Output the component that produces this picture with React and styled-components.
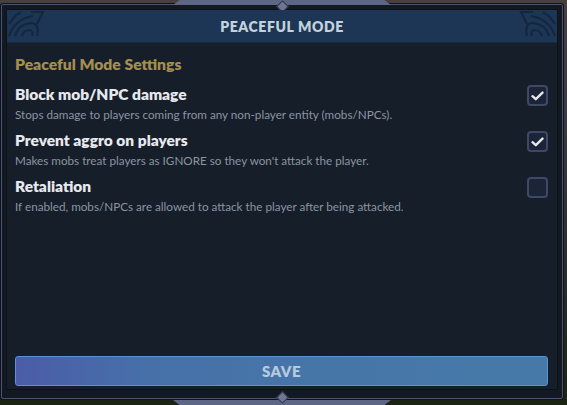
import React, { useState } from 'react'
import styled, { createGlobalStyle } from 'styled-components'

const GlobalStyle = createGlobalStyle`
  html, body {
    margin: 0;
    padding: 0;
  }
  body {
    font-family: Lato, "Noto Sans", sans-serif;
    background: #22241f;
  }
`

const Page = styled.div`
  width: 567px;
  height: 405px;
  box-sizing: border-box;
  padding: 4px 4px 6px 1px;
  background: linear-gradient(180deg, #47403f 0%, #3a3a40 30%, #262c26 70%, #1b2413 100%);
  overflow: hidden;
  display: flex;
`

const Frame = styled.div`
  position: relative;
  flex: 1;
  display: flex;
  box-sizing: border-box;
  background: #131922;
  border: 1px solid #4a5371;
  box-shadow: 0 0 0 1px #0f131b;
  border-radius: 2px;
  padding: 4px 4px 8px 4px;
`

const Tab = styled.div`
  position: absolute;
  left: 171px;
  width: 218px;
  height: 5px;
  ${p => p.bottom ? 'bottom: -7px;' : 'top: -5px;'}
  background: #5d6685;
  clip-path: ${p => p.bottom
    ? 'polygon(0 0, 100% 0, 97% 100%, 3% 100%)'
    : 'polygon(3% 0, 97% 0, 100% 100%, 0 100%)'};
`

const Diamond = styled.div`
  position: absolute;
  left: 276px;
  ${p => p.bottom ? 'bottom: -4px;' : 'top: -3px;'}
  width: 7px;
  height: 7px;
  background: #6d7795;
  border: 1px solid #2a3146;
  transform: rotate(45deg);
`

const Window = styled.div`
  flex: 1;
  display: flex;
  flex-direction: column;
  background: #161e2a;
  border: 1px solid #0d1118;
`

const Header = styled.div`
  position: relative;
  height: 32px;
  flex: none;
  display: flex;
  align-items: center;
  justify-content: center;
  background: #1d3655;
  border-bottom: 1px solid #17283f;
`

const Title = styled.h1`
  margin: 0;
  font-size: 14px;
  font-weight: 800;
  letter-spacing: 0.6px;
  color: #c3d2dc;
`

const Knot = styled.svg`
  position: absolute;
  top: 0;
  ${p => p.right ? 'right: 0; transform: scaleX(-1);' : 'left: 0;'}
  width: 40px;
  height: 28px;
`

const Body = styled.div`
  flex: 1;
  display: flex;
  flex-direction: column;
  padding: 11px 9px 3px 8px;
`

const Section = styled.h2`
  margin: 0 0 10px;
  font-size: 15.7px;
  line-height: 20px;
  font-weight: 800;
  color: #a48e50;
`

const Row = styled.div`
  display: grid;
  grid-template-columns: 1fr auto;
  column-gap: 12px;
  margin-bottom: 8px;
`

const Label = styled.div`
  font-size: 15.5px;
  line-height: 20px;
  font-weight: 800;
  color: #e7e9ee;
`

const Desc = styled.div`
  grid-column: 1;
  margin-top: 1px;
  font-size: 11.7px;
  line-height: 15px;
  color: #8b95a2;
`

const Box = styled.button`
  grid-column: 2;
  grid-row: 1;
  width: 21px;
  height: 21px;
  margin-top: 1px;
  padding: 0;
  display: flex;
  align-items: center;
  justify-content: center;
  box-sizing: border-box;
  background: #1c2437;
  border: 2px solid #3e4968;
  border-radius: 4px;
  cursor: pointer;
`

const SaveButton = styled.button`
  margin-top: auto;
  height: 30px;
  width: 100%;
  box-sizing: border-box;
  border: 1px solid #5b92d2;
  border-radius: 3px;
  background: linear-gradient(90deg, #4b5ca8 0%, #4770a9 25%, #4676a8 60%, #4679a8 100%);
  color: #b7cadc;
  font-family: Lato, "Noto Sans", sans-serif;
  font-size: 15px;
  font-weight: 800;
  letter-spacing: 0.5px;
  cursor: pointer;
`

const Check = () => (
  <svg width="13" height="10" viewBox="0 0 13 10">
    <path d="M1.5 5.2 L4.8 8.2 L11.5 1.6" fill="none" stroke="#e4e7ec" strokeWidth="2.4" strokeLinecap="round" strokeLinejoin="round" />
  </svg>
)

const CornerKnot = ({ right }) => (
  <Knot right={right} viewBox="0 0 40 28">
    <g fill="none" stroke="#142740" strokeWidth="2.2">
      <path d="M2 26 C6 14 14 8 26 6" />
      <path d="M8 26 C10 18 16 14 24 13 C30 13 32 18 30 26" />
      <path d="M15 26 C16 22 19 20 23 20 C26 21 26 24 25 26" />
      <path d="M24 2 L36 2 L30 14" />
      <path d="M2 14 L8 6 L14 2" />
    </g>
  </Knot>
)

const settings = [
  {
    label: 'Block mob/NPC damage',
    desc: 'Stops damage to players coming from any non-player entity (mobs/NPCs).',
    on: true,
  },
  {
    label: 'Prevent aggro on players',
    desc: "Makes mobs treat players as IGNORE so they won't attack the player.",
    on: true,
  },
  {
    label: 'Retaliation',
    desc: 'If enabled, mobs/NPCs are allowed to attack the player after being attacked.',
    on: false,
  },
]

const App = () => {
  const [values, setValues] = useState(settings.map(s => s.on))

  const toggle = i => setValues(values.map((v, j) => (j === i ? !v : v)))

  return (
    <Page>
      <GlobalStyle />
      <Frame>
        <Tab />
        <Diamond />
        <Window>
          <Header>
            <CornerKnot />
            <CornerKnot right />
            <Title>PEACEFUL MODE</Title>
          </Header>
          <Body>
            <Section>Peaceful Mode Settings</Section>
            {settings.map((s, i) => (
              <Row key={s.label}>
                <Label>{s.label}</Label>
                <Box onClick={() => toggle(i)} aria-pressed={values[i]}>
                  {values[i] && <Check />}
                </Box>
                <Desc>{s.desc}</Desc>
              </Row>
            ))}
            <SaveButton>SAVE</SaveButton>
          </Body>
        </Window>
        <Tab bottom />
        <Diamond bottom />
      </Frame>
    </Page>
  )
}

export default App
